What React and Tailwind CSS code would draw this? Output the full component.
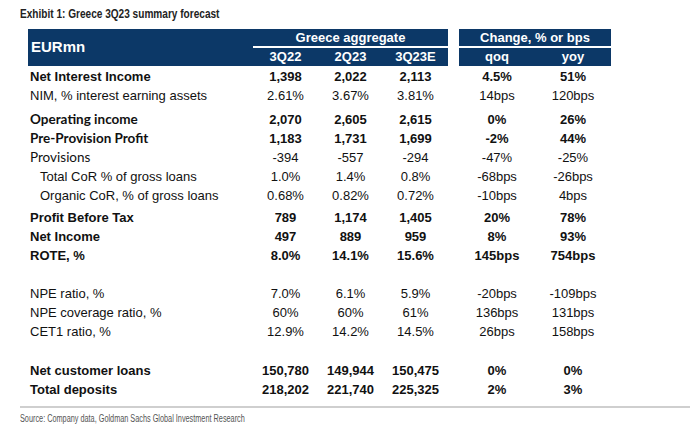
import React from 'react';

const arial = { fontFamily: '"Liberation Sans", Arial, sans-serif' };

const rows = [
  { label: 'Net Interest Income', v: ['1,398', '2,022', '2,113', '4.5%', '51%'], bold: true },
  { label: 'NIM, % interest earning assets', v: ['2.61%', '3.67%', '3.81%', '14bps', '120bps'] },
  { gap: 'h-[5px]' },
  { label: 'Operating income', v: ['2,070', '2,605', '2,615', '0%', '26%'], bold: true, alt: true },
  { label: 'Pre-Provision Profit', v: ['1,183', '1,731', '1,699', '-2%', '44%'], bold: true, alt: true },
  { label: 'Provisions', v: ['-394', '-557', '-294', '-47%', '-25%'], alt: true },
  { label: 'Total CoR % of gross loans', v: ['1.0%', '1.4%', '0.8%', '-68bps', '-26bps'], indent: true },
  { label: 'Organic CoR, % of gross loans', v: ['0.68%', '0.82%', '0.72%', '-10bps', '4bps'], indent: true },
  { gap: 'h-[3px]' },
  { label: 'Profit Before Tax', v: ['789', '1,174', '1,405', '20%', '78%'], bold: true },
  { label: 'Net Income', v: ['497', '889', '959', '8%', '93%'], bold: true },
  { label: 'ROTE, %', v: ['8.0%', '14.1%', '15.6%', '145bps', '754bps'], bold: true },
  { gap: 'h-[19px]' },
  { label: 'NPE ratio, %', v: ['7.0%', '6.1%', '5.9%', '-20bps', '-109bps'] },
  { label: 'NPE coverage ratio, %', v: ['60%', '60%', '61%', '136bps', '131bps'] },
  { label: 'CET1 ratio, %', v: ['12.9%', '14.2%', '14.5%', '26bps', '158bps'] },
  { gap: 'h-[20px]' },
  { label: 'Net customer loans', v: ['150,780', '149,944', '150,475', '0%', '0%'], bold: true },
  { label: 'Total deposits', v: ['218,202', '221,740', '225,325', '2%', '3%'], bold: true },
];

const Row = ({ row }) => {
  const weight = row.bold ? 'font-bold' : 'font-normal';
  return (
    <div className={`flex h-[19px] items-center text-[13px] text-[#111] ${weight}`} style={arial}>
      <div
        className={`w-[225px] pl-[2px] ${row.indent ? 'pl-[12px]' : ''} ${row.alt ? 'text-[13.5px]' : ''}`}
        style={row.alt ? { fontFamily: 'Lato, "Liberation Sans", sans-serif' } : undefined}
      >
        {row.label}
      </div>
      {row.v.slice(0, 3).map((x, i) => (
        <div key={i} className="w-[65px] text-center">{x}</div>
      ))}
      <div className="w-[11px]" />
      {row.v.slice(3).map((x, i) => (
        <div key={i} className="w-[76px] text-center">{x}</div>
      ))}
    </div>
  );
};

export default function App() {
  return (
    <div className="w-[700px] h-[428px] bg-white relative overflow-hidden">
      <div
        className="absolute left-[20px] top-[5px] text-[12px] font-bold text-[#222] whitespace-nowrap scale-x-[0.84] origin-left"
        style={arial}
      >
        Exhibit 1: Greece 3Q23 summary forecast
      </div>

      <div className="pt-[29px] pl-[28px]">
        {/* Header */}
        <div className="flex h-[37px] text-white font-bold" style={arial}>
          <div className="w-[225px] bg-[#0c3867] flex items-center pl-[3px] text-[15px]">EURmn</div>
          <div className="w-[195px] flex flex-col">
            <div className="h-[17px] bg-[#0c3867] flex items-center justify-center text-[13px]">Greece aggregate</div>
            <div className="h-[2px] bg-white" />
            <div className="h-[18px] bg-[#0c3867] flex items-center text-[13px]">
              <div className="w-[65px] text-center">3Q22</div>
              <div className="w-[65px] text-center">2Q23</div>
              <div className="w-[65px] text-center">3Q23E</div>
            </div>
          </div>
          <div className="w-[11px]" />
          <div className="w-[152px] flex flex-col">
            <div className="h-[17px] bg-[#0c3867] flex items-center justify-center text-[13px]">Change, % or bps</div>
            <div className="h-[2px] bg-white" />
            <div className="h-[18px] bg-[#0c3867] flex items-center text-[13px]">
              <div className="w-[76px] text-center">qoq</div>
              <div className="w-[76px] text-center">yoy</div>
            </div>
          </div>
        </div>

        {/* Body */}
        <div className="pt-[1px]">
          {rows.map((r, i) => (r.gap ? <div key={i} className={r.gap} /> : <Row key={i} row={r} />))}
        </div>
      </div>

      <div className="absolute left-[20px] top-[406px] w-[670px] h-[2px] bg-[#cfcfcf]" />
      <div
        className="absolute left-[20px] top-[411px] text-[10px] text-[#555] whitespace-nowrap scale-x-[0.73] origin-left"
        style={arial}
      >
        Source: Company data, Goldman Sachs Global Investment Research
      </div>
    </div>
  );
}
